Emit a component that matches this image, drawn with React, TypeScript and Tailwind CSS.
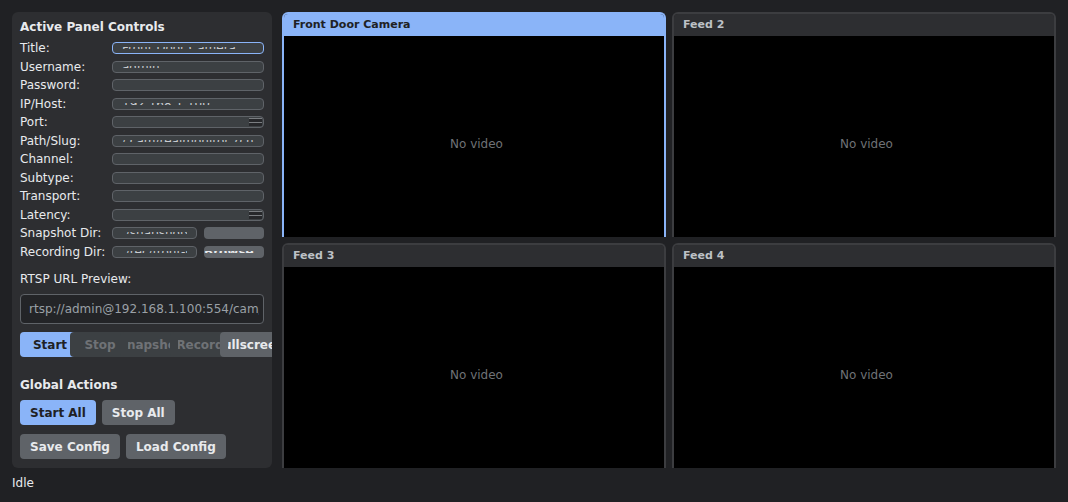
import React from 'react';

type Field = { label: string; value: string; focus?: boolean; spin?: boolean; browse?: string };

const FIELDS: Field[] = [
  { label: 'Title:', value: 'Front Door Camera', focus: true },
  { label: 'Username:', value: 'admin' },
  { label: 'Password:', value: '' },
  { label: 'IP/Host:', value: '192.168.1.100' },
  { label: 'Port:', value: '', spin: true },
  { label: 'Path/Slug:', value: '/ cam/realmonitor ?channel=1' },
  { label: 'Channel:', value: '' },
  { label: 'Subtype:', value: '' },
  { label: 'Transport:', value: '' },
  { label: 'Latency:', value: '', spin: true },
  { label: 'Snapshot Dir:', value: './snapshots/front', browse: '' },
  { label: 'Recording Dir:', value: './rec/front-door', browse: 'Browse...' },
];

const FEEDS = ['Front Door Camera', 'Feed 2', 'Feed 3', 'Feed 4'];

function TinyField({ value, focus, spin }: { value: string; focus?: boolean; spin?: boolean }) {
  return (
    <div
      className={`relative h-[12px] min-w-0 flex-1 rounded-[4px] border bg-[#3c4043] px-[9px] ${
        focus ? 'border-[#8ab4f8]' : 'border-[#5f6368]'
      }`}
    >
      <div className="mt-[4px] h-[2px] overflow-hidden">
        <span className="block whitespace-nowrap text-[12px] leading-[2px] text-[#c8cbcf]">{value}</span>
      </div>
      {spin && (
        <div className="absolute right-[1px] top-[1px] flex h-[8px] w-[13px] flex-col">
          <div className="h-[4px] border-t border-[#7a7d81] bg-[#26272a]" />
          <div className="h-[4px] border-t border-[#7a7d81] bg-[#26272a]" />
        </div>
      )}
    </div>
  );
}

function ActionButton({ label, kind }: { label: string; kind: 'primary' | 'disabled' | 'normal' }) {
  const cls =
    kind === 'primary'
      ? 'bg-[#8ab4f8] text-[#202124]'
      : kind === 'disabled'
        ? 'bg-[#3c4043] text-[#6f7276]'
        : 'bg-[#5f6368] text-[#e8eaed]';
  return (
    <div className={`-ml-[10px] h-[25px] w-[60px] shrink-0 rounded-[4px] px-[8px] first:ml-0 ${cls}`}>
      <div className="flex h-full items-center justify-center overflow-hidden whitespace-nowrap text-[12px] font-bold">
        {label}
      </div>
    </div>
  );
}

function Btn({ children, primary }: { children: React.ReactNode; primary?: boolean }) {
  return (
    <button
      type="button"
      className={`h-[25px] rounded-[4px] px-[10px] text-[12px] font-bold ${
        primary ? 'bg-[#8ab4f8] text-[#202124]' : 'bg-[#5f6368] text-[#e8eaed]'
      }`}
    >
      {children}
    </button>
  );
}

function Tile({ title, active }: { title: string; active?: boolean }) {
  return (
    <div
      className={`flex h-[225px] flex-col overflow-hidden rounded-t-[6px] border-x-2 border-t-2 ${
        active ? 'border-[#8ab4f8]' : 'border-[#3c3d40]'
      }`}
    >
      <div
        className={`flex h-[22px] shrink-0 items-center px-[9px] text-[11px] font-bold ${
          active ? 'bg-[#8ab4f8] text-[#202124]' : 'bg-[#2d2e31] text-[#bdc1c6]'
        }`}
      >
        {title}
      </div>
      <div className="flex h-[214px] shrink-0 items-center justify-center bg-black pl-[5px] pt-[2px] text-[12px] text-[#6f7276]">
        No video
      </div>
    </div>
  );
}

export default function App() {
  return (
    <div className="flex h-[502px] w-[1068px] flex-col overflow-hidden bg-[#202124] font-['DejaVu_Sans',sans-serif] text-[#e8eaed]">
      <div className="flex min-h-0 flex-1 gap-[10px] px-3 pt-3">
        <aside className="flex w-[260px] shrink-0 flex-col overflow-hidden rounded-[6px] bg-[#2d2e31] px-2 pt-[8px]">
          <h2 className="text-[12px] font-bold leading-[14px]">Active Panel Controls</h2>
          <div className="mt-[7px] flex flex-col gap-[4px]">
            {FIELDS.map((f) => (
              <div key={f.label} className="flex h-[14.5px] items-center">
                <span className="w-[92px] shrink-0 text-[12px] leading-[14px]">{f.label}</span>
                <TinyField value={f.value} focus={f.focus} spin={f.spin} />
                {f.browse !== undefined && (
                  <div className="ml-[7px] h-[12px] w-[60px] shrink-0 overflow-hidden rounded-[4px] bg-[#5f6368]">
                    <div className="mt-[5px] h-[2px] overflow-hidden text-center">
                      <span className="block whitespace-nowrap text-[12px] font-bold leading-[2px] text-[#e8eaed]">
                        {f.browse}
                      </span>
                    </div>
                  </div>
                )}
              </div>
            ))}
          </div>

          <div className="mt-[13px] text-[12px] leading-[14px]">RTSP URL Preview:</div>
          <div className="mt-[8px] flex h-[30px] items-center rounded-[4px] border border-[#5f6368] bg-[#232427] pl-[8px] pr-[4px] text-[12px] text-[#9aa0a6]">
            <div className="overflow-hidden whitespace-nowrap">rtsp://admin@192.168.1.100:554/cam/realmonitor</div>
          </div>

          <div className="mt-[8px] flex">
            <ActionButton label="Start" kind="primary" />
            <ActionButton label="Stop" kind="disabled" />
            <ActionButton label="Snapshot" kind="disabled" />
            <ActionButton label="Record" kind="disabled" />
            <ActionButton label="Fullscreen" kind="normal" />
          </div>

          <h2 className="mt-[21px] text-[12px] font-bold leading-[14px]">Global Actions</h2>
          <div className="mt-[8px] flex gap-[6px]">
            <Btn primary>Start All</Btn>
            <Btn>Stop All</Btn>
          </div>
          <div className="mt-[9px] flex gap-[6px]">
            <Btn>Save Config</Btn>
            <Btn>Load Config</Btn>
          </div>
        </aside>

        <main className="grid min-w-0 flex-1 grid-cols-2 grid-rows-[225px_225px] gap-[6px] overflow-hidden">
          {FEEDS.map((t, i) => (
            <Tile key={t} title={t} active={i === 0} />
          ))}
        </main>
      </div>
      <div className="px-3 pb-[11px] pt-[7px] text-[12px] leading-[16px]">Idle</div>
    </div>
  );
}
